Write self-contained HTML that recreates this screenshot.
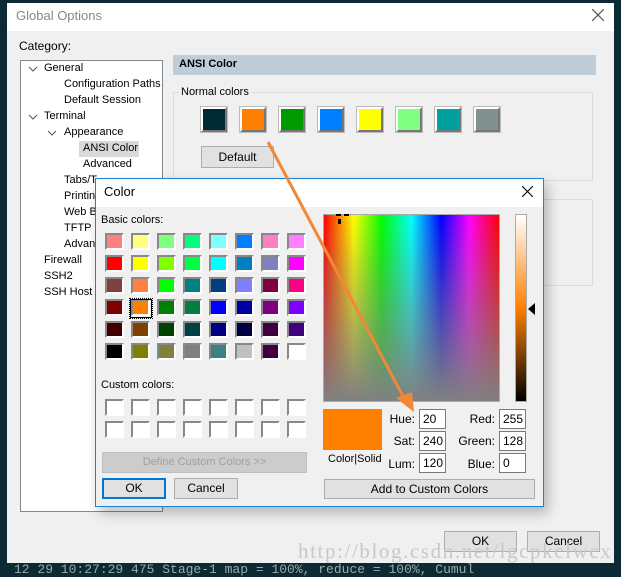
<!DOCTYPE html><html><head><style>
*{margin:0;padding:0;box-sizing:border-box}
body{width:621px;height:572px;overflow:hidden;background:#0b2a33;font-family:"Liberation Sans",sans-serif;font-size:11px;color:#000;position:relative}
.a{position:absolute}
.t{position:absolute;white-space:nowrap}
.sw{position:absolute;width:26px;height:25px;border:2px solid;border-color:#fff #777 #777 #fff;box-shadow:0 0 0 1px #bbb}
.btn{position:absolute;background:#e1e1e1;border:1px solid #adadad;text-align:center;line-height:18px}
.c{position:absolute;width:19px;height:17px;border:2px solid;border-color:#888 #fff #fff #888}
.in{position:absolute;width:27px;height:20px;background:#fff;border:1px solid #7a7a7a;padding-left:3px;line-height:18px;font-size:12px}
.lb{position:absolute;text-align:right;width:50px;font-size:12px}
</style></head><body>
<div class="a" style="left:7px;top:3px;width:607px;height:560px;background:#f0f0f0"></div>
<div class="a" style="left:7px;top:3px;width:607px;height:28px;background:#fff"></div>
<div class="t" style="left:16px;top:8px;font-size:13px;color:#888">Global Options</div>
<svg class="a" style="left:592px;top:9px" width="12" height="12"><path d="M0 0L12 12M12 0L0 12" stroke="#555" stroke-width="1.2"/></svg>
<div class="t" style="left:19px;top:39px;font-size:12px">Category:</div>
<div class="a" style="left:20px;top:60px;width:143px;height:452px;background:#fff;border:1px solid #828790"></div>
<svg class="a" style="left:0;top:0" width="70" height="140"><path d="M29 67l4 4 4-4M29 115l4 4 4-4M48 131l4 4 4-4" stroke="#555" fill="none"/></svg>
<div class="t" style="left:44px;top:62px">General</div>
<div class="t" style="left:64px;top:78px">Configuration Paths</div>
<div class="t" style="left:64px;top:94px">Default Session</div>
<div class="t" style="left:44px;top:110px">Terminal</div>
<div class="t" style="left:64px;top:126px">Appearance</div>
<div class="a" style="left:79px;top:141px;width:60px;height:16px;background:#d9d9d9"></div>
<div class="t" style="left:83px;top:142px">ANSI Color</div>
<div class="t" style="left:83px;top:158px">Advanced</div>
<div class="t" style="left:64px;top:174px">Tabs/T</div>
<div class="t" style="left:64px;top:190px">Printin</div>
<div class="t" style="left:64px;top:206px">Web B</div>
<div class="t" style="left:64px;top:222px">TFTP S</div>
<div class="t" style="left:64px;top:238px">Advan</div>
<div class="t" style="left:44px;top:254px">Firewall</div>
<div class="t" style="left:44px;top:270px">SSH2</div>
<div class="t" style="left:44px;top:286px">SSH Host K</div>
<div class="a" style="left:173px;top:55px;width:423px;height:20px;background:#bfcdd9"></div>
<div class="t" style="left:179px;top:58px;font-weight:bold">ANSI Color</div>
<div class="a" style="left:173px;top:92px;width:420px;height:89px;border:1px solid #dcdcdc"></div>
<div class="t" style="left:179px;top:86px;background:#f0f0f0;padding:0 2px">Normal colors</div>
<div class="sw" style="left:201px;top:107px;background:#002b33"></div>
<div class="sw" style="left:240px;top:107px;background:#ff8000"></div>
<div class="sw" style="left:279px;top:107px;background:#009900"></div>
<div class="sw" style="left:318px;top:107px;background:#0080ff"></div>
<div class="sw" style="left:357px;top:107px;background:#ffff00"></div>
<div class="sw" style="left:396px;top:107px;background:#80ff80"></div>
<div class="sw" style="left:435px;top:107px;background:#00a0a0"></div>
<div class="sw" style="left:474px;top:107px;background:#829090"></div>
<div class="btn" style="left:201px;top:146px;width:73px;height:22px;line-height:20px;font-size:12px">Default</div>
<div class="a" style="left:173px;top:199px;width:420px;height:87px;border:1px solid #dcdcdc"></div>
<div class="btn" style="left:444px;top:531px;width:73px;height:21px;font-size:12px">OK</div>
<div class="btn" style="left:527px;top:531px;width:73px;height:21px;font-size:12px">Cancel</div>
<div class="t" style="left:298px;top:539px;font-family:'Liberation Serif',serif;font-size:21px;color:#c8c8c8;letter-spacing:1.6px">http://blog.csdn.net/lgcpkclwcx</div>
<div class="t" style="left:14px;top:562px;font-family:'Liberation Mono',monospace;font-size:13px;color:#9aa">12 29 10:27:29 475 Stage-1 map = 100%, reduce = 100%, Cumul</div>

<div class="a" style="left:95px;top:178px;width:449px;height:329px;background:#f0f0f0;border:1px solid #1883d7;box-shadow:4px 6px 12px rgba(0,0,0,.25)"></div>
<div class="a" style="left:96px;top:179px;width:447px;height:28px;background:#fff"></div>
<div class="t" style="left:104px;top:184px;font-size:13px">Color</div>
<svg class="a" style="left:522px;top:186px" width="11" height="11"><path d="M0 0L11 11M11 0L0 11" stroke="#000" stroke-width="1.1"/></svg>
<div class="t" style="left:101px;top:214px">Basic colors:</div>
<div id="g"></div>
<div class="t" style="left:101px;top:379px">Custom colors:</div>
<div class="btn" style="left:102px;top:452px;width:205px;height:21px;color:#a0a0a0;background:#ccc;border-color:#bfbfbf">Define Custom Colors &gt;&gt;</div>
<div class="btn" style="left:102px;top:478px;width:64px;height:21px;border:2px solid #0078d7;line-height:17px;font-size:12px">OK</div>
<div class="btn" style="left:174px;top:478px;width:64px;height:21px;font-size:12px">Cancel</div>
<div class="a" style="left:323px;top:214px;width:177px;height:188px;background:linear-gradient(90deg,#f00,#ff0 17%,#0f0 33%,#0ff 50%,#00f 67%,#f0f 83%,#f00);border:1px solid #aaa"></div>
<div class="a" style="left:324px;top:215px;width:175px;height:186px;background:linear-gradient(rgba(128,128,128,0),#808080)"></div>
<div class="a" style="left:336px;top:214px;width:5px;height:2px;background:#000"></div>
<div class="a" style="left:344px;top:214px;width:5px;height:2px;background:#000"></div>
<div class="a" style="left:338px;top:219px;width:3px;height:5px;background:#000"></div>
<div class="a" style="left:515px;top:214px;width:12px;height:188px;border:1px solid #aaa;background:linear-gradient(#fff,#ff8000 50%,#000)"></div>
<div class="a" style="left:528px;top:303px;width:0;height:0;border-top:6px solid transparent;border-bottom:6px solid transparent;border-right:7px solid #000"></div>
<div class="a" style="left:323px;top:409px;width:59px;height:41px;background:#ff8000"></div>
<div class="t" style="left:328px;top:453px">Color|Solid</div>
<div class="lb" style="left:365px;top:412px">Hue:</div><div class="in" style="left:419px;top:409px">20</div>
<div class="lb" style="left:365px;top:434px">Sat:</div><div class="in" style="left:419px;top:431px">240</div>
<div class="lb" style="left:365px;top:457px">Lum:</div><div class="in" style="left:419px;top:453px">120</div>
<div class="lb" style="left:445px;top:412px">Red:</div><div class="in" style="left:499px;top:409px">255</div>
<div class="lb" style="left:445px;top:434px">Green:</div><div class="in" style="left:499px;top:431px">128</div>
<div class="lb" style="left:445px;top:457px">Blue:</div><div class="in" style="left:499px;top:453px">0</div>
<div class="btn" style="left:324px;top:479px;width:211px;height:20px;font-size:12px">Add to Custom Colors</div>
<svg class="a" style="left:0;top:0" width="621" height="572"><line x1="268" y1="142" x2="405" y2="400" stroke="#f08838" stroke-width="3"/><polygon points="396,398 414,412 412,392" fill="#f08838"/></svg>
<script>
var C=["#FF8080","#FFFF80","#80FF80","#00FF80","#80FFFF","#0080FF","#FF80C0","#FF80FF","#FF0000","#FFFF00","#80FF00","#00FF40","#00FFFF","#0080C0","#8080C0","#FF00FF","#804040","#FF8040","#00FF00","#008080","#004080","#8080FF","#800040","#FF0080","#800000","#FF8000","#008000","#008040","#0000FF","#0000A0","#800080","#8000FF","#400000","#804000","#004000","#004040","#000080","#000040","#400040","#400080","#000000","#808000","#808040","#808080","#408080","#C0C0C0","#400040","#FFFFFF"],h="";
for(var i=0;i<48;i++){var r=Math.floor(i/8),c=i%8;h+='<div class="c" style="left:'+(105+c*26)+'px;top:'+(233+r*22)+'px;background:'+C[i]+'"></div>';}
h+='<div class="a" style="left:129px;top:298px;width:24px;height:21px;border:1px dotted #000"></div><div class="a" style="left:130px;top:299px;width:22px;height:19px;border:1px solid #000"></div>';
for(var i=0;i<16;i++){var r=Math.floor(i/8),c=i%8;h+='<div class="c" style="left:'+(105+c*26)+'px;top:'+(399+r*22)+'px;background:#fff"></div>';}
document.getElementById("g").innerHTML=h;
</script>
</body></html>
